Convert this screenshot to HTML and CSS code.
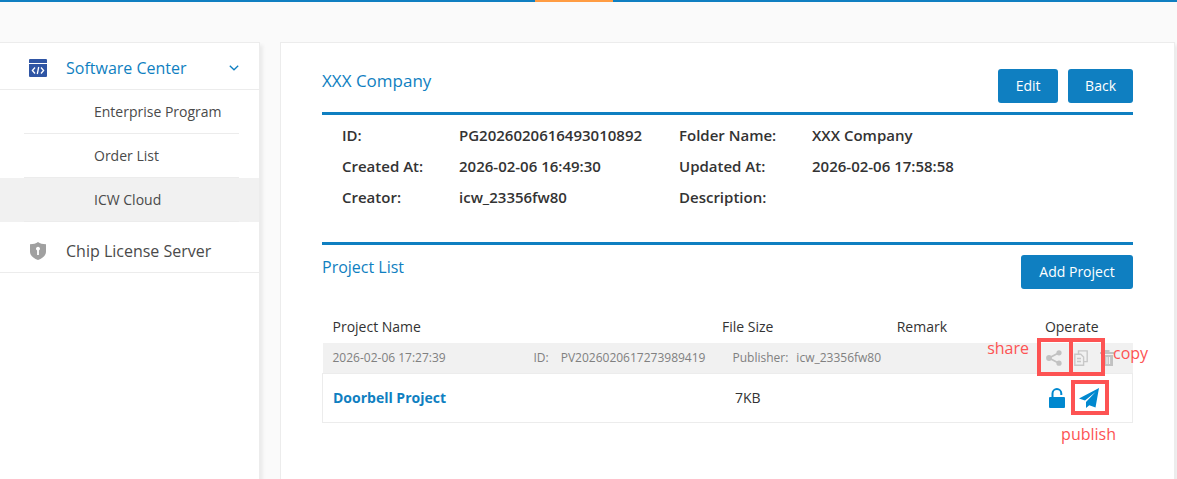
FILE: index.html
```html
<!DOCTYPE html>
<html lang="en">
<head>
    <meta charset="utf-8">
    <title>ICW Cloud</title>
    <link rel="stylesheet" href="styles.css">
</head>
<body>
<div class="topline"></div>
<div class="page">
  <nav class="sidebar">
    <a class="menu-title open" href="#software">
      <svg class="menu-icon" viewBox="0 0 18 18">
        <path fill="#2f55a4" d="M1 0h16a1 1 0 0 1 1 1v3H0V1a1 1 0 0 1 1-1zM0 5h18v12a1 1 0 0 1-1 1H1a1 1 0 0 1-1-1z"/>
        <path fill="none" stroke="#fff" stroke-width="1.3" d="M6 8.500L3.400 11.500L6 14.500M12 8.500L14.600 11.500L12 14.500M9.700 8L8.300 15"/>
      </svg>
      <span>Software Center</span>
      <svg class="arrow" viewBox="0 0 10 6"><path fill="none" stroke="#0f7fc1" stroke-width="1.300" d="M.8.8L5 4.800L9.200.8"/></svg>
    </a>
    <ul class="submenu">
      <li><a href="#program">Enterprise Program</a></li>
      <li><a href="#orders">Order List</a></li>
      <li class="active"><a href="#cloud">ICW Cloud</a></li>
    </ul>
    <a class="menu-title" href="#license">
      <svg class="menu-icon" viewBox="0 0 18 18">
        <path fill="#a0a0a0" d="M9 0c2 1.400 4.500 2.200 8 2.300v7.200c0 4-3.500 7-8 8.500-4.500-1.500-8-4.500-8-8.500V2.300C4.500 2.200 7 1.400 9 0z"/>
        <path fill="#fff" d="M9 4.800a2 2 0 0 1 .9 3.800V13H8.100V8.600A2 2 0 0 1 9 4.800z"/>
      </svg>
      <span>Chip License Server</span>
    </a>
  </nav>

  <main class="content">
    <div class="head">
      <h1>XXX Company</h1>
      <div class="buttons">
        <button type="button">Edit</button>
        <button type="button">Back</button>
      </div>
    </div>
    <dl class="info">
      <dt>ID:</dt><dd>PG2026020616493010892</dd>
      <dt>Folder Name:</dt><dd>XXX Company</dd>
      <dt>Created At:</dt><dd>2026-02-06 16:49:30</dd>
      <dt>Updated At:</dt><dd>2026-02-06 17:58:58</dd>
      <dt>Creator:</dt><dd>icw_23356fw80</dd>
      <dt>Description:</dt><dd></dd>
    </dl>
    <div class="head list-head">
      <h2>Project List</h2>
      <div class="buttons">
        <button type="button">Add Project</button>
      </div>
    </div>

    <div class="projects">
      <table>
        <thead>
          <tr>
            <th class="name">Project Name</th>
            <th class="size">File Size</th>
            <th class="remark">Remark</th>
            <th class="operate">Operate</th>
          </tr>
        </thead>
        <tbody>
          <tr class="meta">
            <td colspan="3">
              <div class="meta-row">
                <span class="date">2026-02-06 17:27:39</span>
                <span class="pid"><span>ID:</span><span>PV2026020617273989419</span></span>
                <span class="publisher"><span>Publisher:</span><span>icw_23356fw80</span></span>
              </div>
            </td>
            <td>
              <div class="tools">
                <button type="button" class="icon" aria-label="Share">
                  <svg width="16" height="16" viewBox="0 0 16 16">
                    <path fill="none" stroke="#c2c2c2" stroke-width="1.800" d="M13 2.800L3 8l10 5.200"/>
                    <g fill="#c2c2c2"><circle cx="13" cy="2.800" r="2.600"/><circle cx="3" cy="8" r="2.900"/><circle cx="13" cy="13.200" r="2.600"/></g>
                  </svg>
                </button>
                <button type="button" class="icon" aria-label="Copy">
                  <svg width="14" height="16" viewBox="0 0 14 16">
                    <path fill="none" stroke="#c8c8c8" stroke-width="1.400" d="M4.500 4V.9h8.700v10.700H10M.8 4.200h6L9.600 7v8.200H.8zM3 8.500h4M3 11.500h4"/>
                  </svg>
                </button>
                <button type="button" class="icon" aria-label="Delete">
                  <svg width="14" height="16" viewBox="0 0 14 16">
                    <path fill="#c2c2c2" d="M4.500 0h5v2H14v2H0V2h4.500zM1 5h12v11H1z"/>
                    <path stroke="#f1f1f1" stroke-width="1.200" d="M4.500 7v7M7 7v7M9.500 7v7"/>
                  </svg>
                </button>
              </div>
            </td>
          </tr>
          <tr class="project">
            <td><a href="#doorbell">Doorbell Project</a></td>
            <td class="size">7KB</td>
            <td></td>
            <td>
              <div class="tools big">
                <button type="button" class="icon" aria-label="Unlock">
                  <svg width="18" height="20" viewBox="0 0 18 20">
                    <path fill="none" stroke="#0088cf" stroke-width="2" d="M4.500 10V5.500a4.400 4.400 0 0 1 8.800 0V7"/>
                    <rect x="1" y="9" width="16" height="11" rx="1" fill="#0088cf"/>
                  </svg>
                </button>
                <button type="button" class="icon" aria-label="Publish">
                  <svg width="20" height="20" viewBox="0 0 20 20">
                    <path fill="#0088cf" d="M20 0L0 10.500l6 2L16.500 4 7 14v6l3.300-2.700L16.500 19.500z"/>
                  </svg>
                </button>
              </div>
            </td>
          </tr>
        </tbody>
      </table>
      <!-- usage hints over the icons -->
      <span class="mark mark-share"></span>
      <span class="mark mark-copy"></span>
      <span class="mark mark-publish"></span>
      <span class="hint hint-share">share</span>
      <span class="hint hint-copy">copy</span>
      <span class="hint hint-publish">publish</span>
    </div>
  </main>
</div>
</body>
</html>
```
FILE: styles.css
```css
* {
    box-sizing: border-box;
}

body {
    margin: 0;
    min-height: 100vh;
    display: flex;
    flex-direction: column;
    background: #fafafa;
    color: #333;
    font: 14px/20px "Open Sans", "Noto Sans", sans-serif;
}

a {
    color: inherit;
    text-decoration: none;
}

.topline {
    height: 2px;
    background: linear-gradient(#ff9c43, #ff9c43) 535px 0 / 78px 2px no-repeat #0f7fc1;
}

.page {
    flex: 1;
    display: flex;
    gap: 20px;
    padding: 40px 2px 0 0;
}

.sidebar,
.content {
    background: #fff;
    border: 1px solid #ececec;
    border-bottom: none;
    box-shadow: 3px 3px 3px #ececec;
}

.sidebar {
    flex: 0 0 260px;
    border-left: none;
}

.menu-title {
    display: flex;
    align-items: center;
    height: 47px;
    padding: 3px 20px 0 29px;
    border-bottom: 1px solid #ececec;
    font-size: 16px;
    color: #4a4a4a;
}

.menu-title.open {
    color: #0f7fc1;
}

.menu-icon {
    width: 18px;
    height: 18px;
    margin-right: 19px;
}

.arrow {
    width: 10px;
    height: 6px;
    margin-left: auto;
}

.submenu {
    margin: 0 0 4px;
    padding: 0;
    list-style: none;
    color: #4a4a4a;
}

.submenu li {
    padding: 0 20px 0 24px;
}

.submenu li.active {
    background: #f1f1f1;
}

.submenu a {
    display: block;
    height: 44px;
    padding-left: 70px;
    border-bottom: 1px solid #ececec;
    line-height: 44px;
}

.content {
    flex: 1;
    padding: 24px 41px;
}

.head {
    display: flex;
    justify-content: space-between;
    height: 48px;
    border-bottom: 3px solid #0f7fc1;
}

.list-head {
    height: 56px;
    padding-top: 10px;
    border-bottom: none;
    border-top: 3px solid #0f7fc1;
}

h1,
h2 {
    margin: 0;
    font-size: 16px;
    font-weight: normal;
    line-height: 28px;
    color: #0f7fc1;
}

h1 {
    font-size: 17px;
}

h2 {
    line-height: 24px;
}

.buttons {
    display: flex;
    gap: 10px;
    padding-top: 2px;
}

.list-head .buttons {
    padding-top: 0;
}

.buttons button {
    height: 34px;
    min-width: 60px;
    padding: 0 17px;
    border: none;
    border-radius: 3px;
    background: #0f7fc1;
    color: #fff;
    font: inherit;
}

.list-head button {
    min-width: 112px;
}

.info {
    display: grid;
    grid-template-columns: 117px 220px 133px 1fr;
    margin: 0;
    padding: 5px 0 29px 20px;
    font-size: 15px;
    font-weight: 600;
    line-height: 31px;
}

.info dd {
    margin: 0;
}

.projects {
    position: relative;
    padding-top: 13px;
}

table {
    width: 100%;
    table-layout: fixed;
    border-collapse: collapse;
}

th,
td {
    padding: 0;
    font-weight: normal;
    text-align: center;
}

th {
    height: 32px;
}

.name {
    width: 42%;
    padding-left: 10px;
    text-align: left;
}

.size {
    width: 21%;
}

.remark {
    width: 22%;
}

.meta {
    height: 30px;
    background: #f1f1f1;
    color: #808080;
    font-size: 12px;
}

.meta-row {
    display: grid;
    grid-template-columns: 201px 199px 1fr;
    padding-left: 10px;
    text-align: left;
}

.pid,
.publisher {
    display: flex;
    gap: 8px;
}

.pid {
    gap: 12px;
}

.project {
    height: 49px;
    border: 1px solid #ececec;
}

.project td:first-child {
    padding-left: 10px;
    text-align: left;
}

.project a {
    font-weight: bold;
    color: #0f7fc1;
}

.tools {
    display: flex;
    justify-content: flex-end;
    align-items: center;
    gap: 12px;
    padding-right: 19px;
}

.tools.big {
    gap: 13px;
    padding-right: 33px;
}

.icon {
    display: flex;
    padding: 0;
    border: none;
    background: none;
}

.mark {
    position: absolute;
    border: 4px solid #fd5353;
}

.mark-share {
    top: 40px;
    right: 60px;
    width: 36px;
    height: 38px;
}

.mark-copy {
    top: 40px;
    right: 28px;
    width: 36px;
    height: 38px;
}

.mark-publish {
    top: 82px;
    right: 24px;
    width: 38px;
    height: 35px;
}

.hint {
    position: absolute;
    color: #fd5353;
    font-size: 16px;
}

.hint-share {
    top: 40px;
    right: 104px;
}

.hint-copy {
    top: 45px;
    left: calc(100% - 20px);
}

.hint-publish {
    top: 126px;
    right: 17px;
}
```
